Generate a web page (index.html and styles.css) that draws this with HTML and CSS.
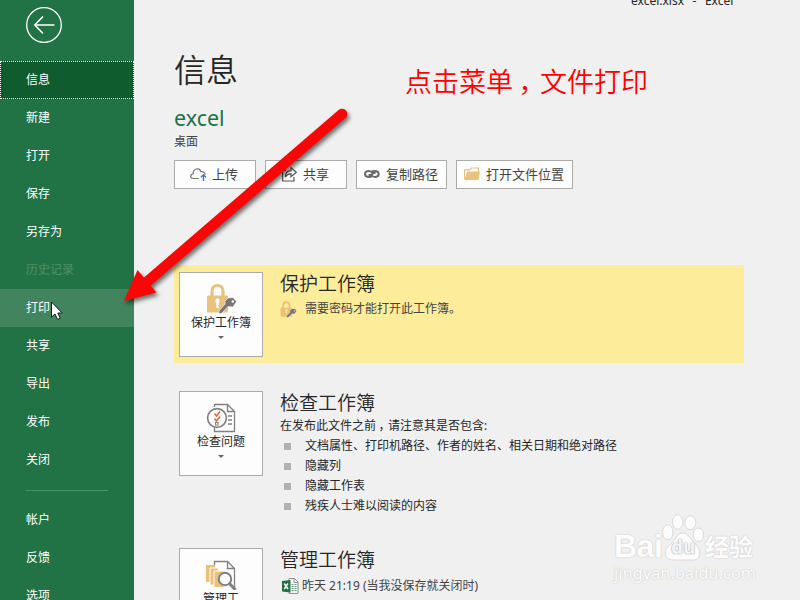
FILE: index.html
```html
<!DOCTYPE html>
<html lang="zh-CN">
<head>
  <meta charset="UTF-8">
  <meta name="viewport" content="width=device-width, initial-scale=1">
  <title>excel.xlsx - Excel</title>
  <link rel="stylesheet" href="styles.css">
</head>
<body>

<div class="app">
  <nav class="sidebar">
    <button class="back" type="button">
      <svg width="38" height="38" viewBox="0 0 38 38" fill="none" stroke="#fff">
        <circle cx="19" cy="19" r="17.3" stroke-width="1.3"/>
        <path d="M10 19H29.500" stroke-width="2" stroke="#c8ddd0"/>
        <path d="M18 10.500L9.800 19L18 27.500" stroke-width="1.500"/>
      </svg>
    </button>
    <a class="item active">信息</a>
    <a class="item">新建</a>
    <a class="item">打开</a>
    <a class="item">保存</a>
    <a class="item">另存为</a>
    <a class="item disabled">历史记录</a>
    <a class="item hover">打印</a>
    <a class="item">共享</a>
    <a class="item">导出</a>
    <a class="item">发布</a>
    <a class="item">关闭</a>
    <div class="divider"></div>
    <a class="item">帐户</a>
    <a class="item">反馈</a>
    <a class="item">选项</a>
  </nav>

  <main class="main">
    <div class="titlebar"><span>excel.xlsx</span><span>-</span><span>Excel</span></div>
    <h1>信息</h1>
    <div class="filename">excel</div>
    <div class="location">桌面</div>

    <div class="buttons">
      <button class="btn wide" type="button">
        <svg width="16" height="16" viewBox="0 0 16 16" fill="none">
          <path d="M9 12.500H3.200C-.3 12.300 0 8 3.200 8C2.800 2.500 9.500 1 10.800 5.600C13.500 5.200 15 6.600 15.200 8.500" stroke="#777" stroke-width="1.200"/>
          <path d="M13.500 15V9M11 11.300L13.500 8.800L16 11.300" stroke="#3b78b8" stroke-width="1.400"/>
        </svg>
        上传
      </button>
      <button class="btn wide" type="button">
        <svg width="16" height="16" viewBox="0 0 16 16" fill="none" stroke="#555" stroke-width="1.200">
          <path d="M5 4.500H1.600V15H13V11"/>
          <path d="M4.300 11C4.500 6.500 7 4.700 10 4.600V1.500L15.300 6.200L10 10.800V7.800C7.500 7.600 5.700 8.600 4.300 11Z"/>
        </svg>
        共享
      </button>
      <button class="btn" type="button">
        <svg width="16" height="16" viewBox="0 0 16 16" fill="none" stroke="#6b6b6b" stroke-width="2">
          <path d="M8.500 9.500C7 12 1 11.600 1 8C1 4.400 7 4 8.200 7C8.700 8.200 8 9 7 9H4.500"/>
          <path d="M7 6.500C8.500 4 14.700 4.400 14.700 8C14.700 11.600 8.800 12 7.700 9M8.500 7H11.500"/>
        </svg>
        复制路径
      </button>
      <button class="btn" type="button">
        <svg width="16" height="16" viewBox="0 0 16 16">
          <path d="M.6 13V3.800H5.500L7.500 2H14.400V6" fill="#fff" stroke="#e8c27e" stroke-width="1.200"/>
          <path d="M3.200 5.600H16L14.400 14H.5Z" fill="#e8c27e"/>
        </svg>
        打开文件位置
      </button>
    </div>

    <section class="card protect">
      <button class="tile" type="button">
        <svg width="32" height="32" viewBox="0 0 32 32">
          <path d="M7 14V9.500C7 1.500 18 1.500 18 9.500V14" fill="none" stroke="#e8c27e" stroke-width="3.200"/>
          <rect x="2" y="13.500" width="21" height="17" rx="1.500" fill="#e8c27e"/>
          <path d="M11.300 26V21C9.500 19 10.500 16.500 12.500 16.500S15.500 19 13.700 21V26Z" fill="#fff"/>
          <path d="M23 16L28 15.500L31.500 19.500L28 25L23 24.500L17 31L14 32V29L20 22L20 19Z" fill="#777" stroke="#fdfdfd" stroke-width=".6"/>
          <circle cx="27.800" cy="19.500" r="1.200" fill="#fff"/>
        </svg>
        <span>保护工作簿</span>
        <i class="caret"></i>
      </button>
      <div class="info">
        <h2>保护工作簿</h2>
        <div class="status">
          <svg width="17" height="17" viewBox="0 0 32 32">
            <path d="M6 14V8.500C6 0 18 0 18 8.500V14" fill="none" stroke="#ebc079" stroke-width="3.400"/>
            <rect x="1" y="12.500" width="22" height="17" rx="1.500" fill="#ebc079"/>
            <path d="M10.800 24V19.500C9 17.500 10 15 12 15S15 17.500 13.200 19.500V24Z" fill="#fdec9a"/>
            <path d="M23 15L28 14.500L31 18.500L27.500 24L22 23.500L15.500 30.500L13 31V28L19.500 21L19 18Z" fill="#777"/>
            <circle cx="27.500" cy="18.500" r="1.200" fill="#fff"/>
          </svg>
          需要密码才能打开此工作簿。
        </div>
      </div>
    </section>

    <section class="card check">
      <button class="tile" type="button">
        <svg width="32" height="32" viewBox="0 0 32 32" fill="none" stroke="#808080" stroke-width="1.300">
          <path d="M9.500 6V3.500H22.500L29.500 10.500V30.500H9.500V26M22.500 3.500V10.500H29.500"/>
          <path d="M23 15H27M23 19H27M23 23H27"/>
          <circle cx="12" cy="17" r="9.400" fill="#fdfdfd" stroke-width="1.600"/>
          <path d="M9.500 12.500L11.500 15L15 10.500M9.500 17.500L11.500 20L15 15.500" stroke="#e8603c" stroke-width="1.500"/>
          <rect x="10.500" y="21.500" width="2.500" height="2.500" stroke-width="1"/>
        </svg>
        <span>检查问题</span>
        <i class="caret"></i>
      </button>
      <div class="info">
        <h2>检查工作簿</h2>
        <p>在发布此文件之前<span class="comma">，</span>请注意其是否包含:</p>
        <ul>
          <li>文档属性、打印机路径、作者的姓名、相关日期和绝对路径</li>
          <li>隐藏列</li>
          <li>隐藏工作表</li>
          <li>残疾人士难以阅读的内容</li>
        </ul>
      </div>
    </section>

    <section class="card manage">
      <button class="tile" type="button">
        <svg width="32" height="32" viewBox="0 0 32 32">
          <path d="M1 7H10V24H1Z" fill="#ebc079"/>
          <path d="M5 10H13V27H5Z" fill="#ebc079" stroke="#fdfdfd"/>
          <path d="M9 13H19V29.500H9Z" fill="#ebc079" stroke="#fdfdfd"/>
          <path d="M9.500 7V3.500H22.500L29.500 10.500V30M22.500 3.500V10.500H29.500" fill="none" stroke="#808080" stroke-width="1.300"/>
          <circle cx="20" cy="21" r="6.200" fill="#fdfdfd" stroke="#808080" stroke-width="2"/>
          <path d="M24.500 25.500L30.500 32" stroke="#808080" stroke-width="3"/>
        </svg>
        <span>管理工<br>作簿</span>
      </button>
      <div class="info">
        <h2>管理工作簿</h2>
        <div class="version">
          <svg width="17" height="16" viewBox="0 0 17 16">
            <path d="M7 .6H12.500L16 4V15.400H7Z" fill="#fff" stroke="#8a8a8a"/>
            <path d="M12 .6V4.500H16" fill="none" stroke="#8a8a8a"/>
            <path d="M9.500 6.500H11.500M12.500 6.500H14.500M9.500 8.500H11.500M12.500 8.500H14.500M9.500 10.500H11.500M12.500 10.500H14.500M9.500 12.500H11.500M12.500 12.500H14.500" stroke="#5f9e79"/>
            <path d="M0 3L8.500 2V14.500L0 13.500Z" fill="#217346"/>
            <path d="M2.300 5.500L6 11M6 5.500L2.300 11" stroke="#fff" stroke-width="1.400"/>
          </svg>
          昨天 21:19 (当我没保存就关闭时)
        </div>
      </div>
    </section>
  </main>

  <!-- annotation over the page -->
  <div class="note">点击菜单<span class="comma">，</span>文件打印</div>
  <svg class="arrow" width="240" height="210" viewBox="0 0 240 210">
    <path d="M228 14L34 181" stroke="#fb0606" stroke-width="10.500" stroke-linecap="round"/>
    <path d="M10 201L23.500 170L42.500 192.500Z" fill="#fb0606"/>
  </svg>
  <svg class="cursor" width="14" height="20" viewBox="0 0 14 20">
    <path d="M1.500 1V16L5 13L7.600 18.500L10.200 17.300L7.800 12H12.200Z" fill="#fff" stroke="#142019" stroke-width="1"/>
  </svg>

  <div class="watermark">
    <div class="brand">
      <span class="bai">Bai</span>
      <span class="paw">
        <svg width="43" height="49" viewBox="0 0 43 49" fill="#fcfcfc" stroke="#dadada">
          <ellipse cx="5.800" cy="18.300" rx="5.200" ry="7.500"/>
          <ellipse cx="15.700" cy="8" rx="5.200" ry="7.300"/>
          <ellipse cx="28.300" cy="8.700" rx="5.500" ry="7"/>
          <ellipse cx="36.500" cy="20.700" rx="5.200" ry="6.700"/>
          <path d="M21 19C26 19 28 25 33 29.500C40 36 39 46 32 46H11C2 46 1 36 8 30.500C14 26 15 19 21 19Z"/>
        </svg>
        <b>du</b>
      </span>
      <span class="jingyan">经验</span>
    </div>
    <div class="site">jingyan.baidu.com</div>
  </div>
</div>

</body>
</html>
```
FILE: styles.css
```css
* {
  box-sizing: border-box;
}

body {
  margin: 0;
  font-family: "Noto Sans", "Noto Sans CJK SC", sans-serif;
  font-size: 12px;
  color: #262626;
  background: #f0f0f0;
}

button {
  font: inherit;
  color: inherit;
  padding: 0;
  border: none;
  background: none;
}

svg {
  display: block;
  flex: none;
}

h1, h2, p, ul {
  margin: 0;
  padding: 0;
}

.app {
  position: relative;
  display: flex;
  width: 800px;
  height: 600px;
  overflow: hidden;
}

/* sidebar */
.sidebar {
  width: 134px;
  height: 600px;
  flex: none;
  overflow: hidden;
  background: #217346;
  color: #fff;
}

.back {
  display: block;
  margin: 6px 0 17px 25px;
}

.item {
  display: block;
  height: 38px;
  padding-left: 26px;
  line-height: 37px;
}

.item.active {
  background: #0f5c2e;
  outline: 1px dotted #fff;
  outline-offset: -1px;
}

.item.hover {
  background: #41845e;
}

.item.disabled {
  color: #4d9069;
}

.divider {
  width: 82px;
  height: 1px;
  margin: 11px 0 10px 26px;
  background: #439467;
}

/* content */
.main {
  flex: 1;
  padding-left: 40px;
}

.titlebar {
  display: flex;
  gap: 8.5px;
  height: 10px;
  margin-top: -8px;
  padding-left: 457px;
  line-height: 18px;
}

h1 {
  margin-top: 48px;
  font-size: 32px;
  font-weight: 350;
  line-height: 40px;
}

.filename {
  margin-top: 14px;
  font-size: 21.5px;
  line-height: 28px;
  color: #217346;
}

.location {
  margin-top: 2px;
  line-height: 16px;
  color: #444;
}

.buttons {
  display: flex;
  gap: 9px;
  margin-top: 10px;
}

.btn {
  display: flex;
  align-items: center;
  gap: 6px;
  height: 29px;
  padding: 0 8px 2px 7px;
  border: 1px solid #ababab;
  background: #fdfdfd;
  font-size: 13px;
  line-height: 20px;
  color: #444;
}

.btn.wide {
  padding: 0 17px 2px 15px;
}

.card {
  display: flex;
  gap: 17px;
  width: 570px;
  padding: 7px 5px 0;
}

.protect {
  height: 98px;
  margin-top: 76px;
  background: #fdec9a;
}

.check {
  height: 136px;
  margin-top: 21px;
}

.manage {
  margin-top: 21px;
}

.tile {
  display: flex;
  flex-direction: column;
  align-items: center;
  flex: none;
  width: 84px;
  height: 85px;
  padding-top: 9px;
  border: 1px solid #ababab;
  background: #fdfdfd;
  line-height: 16px;
}

.tile span {
  margin-top: 1px;
}

.caret {
  margin-top: 5px;
  border: 3px solid transparent;
  border-top-color: #666;
  border-bottom: none;
}

h2 {
  font-size: 19px;
  font-weight: 350;
  line-height: 24px;
}

.status {
  display: flex;
  align-items: center;
  gap: 8px;
  margin-top: 3px;
  line-height: 20px;
  color: #444;
}

.info p {
  padding-top: 1px;
  line-height: 20px;
}

.info ul {
  list-style: none;
}

.info li {
  display: flex;
  align-items: center;
  gap: 14px;
  padding-left: 4px;
  line-height: 20px;
}

.info li::before {
  content: "";
  width: 7px;
  height: 7px;
  background: #b1b1b1;
}

.version {
  display: flex;
  align-items: center;
  gap: 3px;
  margin: 4px 0 0 2px;
  line-height: 20px;
  color: #444;
}

/* the comma sits in the middle of its cell */
.comma {
  position: relative;
  left: 0.2em;
}

/* overlays */
.note {
  position: absolute;
  left: 405px;
  top: 62px;
  font-size: 27px;
  font-weight: 350;
  line-height: 40px;
  color: #f00;
}

.arrow {
  position: absolute;
  left: 114px;
  top: 100px;
  filter: drop-shadow(2px 3px 2px rgba(0, 0, 0, 0.55));
}

.cursor {
  position: absolute;
  left: 50px;
  top: 301px;
}

.watermark {
  position: absolute;
  left: 614px;
  top: 514px;
  color: #fcfcfc;
  text-shadow: 0 0 1px #c8c8c8, 0 0 2px #d0d0d0;
}

.brand {
  display: flex;
  align-items: flex-end;
  height: 49px;
}

.bai {
  width: 48px;
  font-family: "Liberation Sans", sans-serif;
  font-size: 32px;
  font-weight: bold;
  letter-spacing: -0.5px;
  line-height: 34px;
}

.paw {
  position: relative;
}

.paw b {
  position: absolute;
  left: 9px;
  top: 21px;
  font-size: 19px;
  line-height: 24px;
  color: #f4f4f4;
  text-shadow: 0 0 1px #999, 0 0 2px #bbb;
}

.jingyan {
  font-size: 24px;
  font-weight: bold;
  line-height: 32px;
}

.site {
  margin-top: 1px;
  font-size: 16px;
  letter-spacing: 0.2px;
  line-height: 18px;
}
```
